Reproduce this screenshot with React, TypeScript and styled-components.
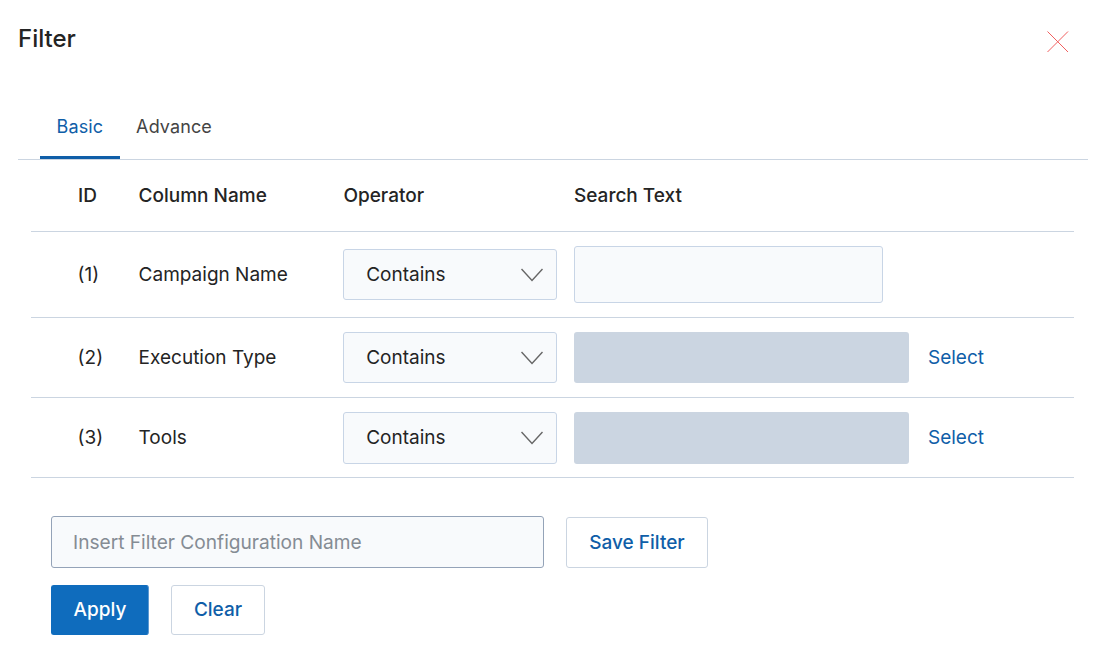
import React from "react";
import styled, { createGlobalStyle } from "styled-components";

const GlobalStyle = createGlobalStyle`
  html, body {
    margin: 0;
    background: #fff;
  }
  body {
    font-family: Inter, "Liberation Sans", sans-serif;
    color: #242424;
  }
`;

const Dialog = styled.div`
  width: 1093px;
  height: 652px;
  overflow: hidden;
  padding: 0 5px 0 18px;
  box-sizing: border-box;
`;

const Header = styled.div`
  display: flex;
  justify-content: space-between;
  height: 101px;
  padding-top: 24px;
  box-sizing: border-box;
`;

const Title = styled.h2`
  margin: 0;
  font-size: 24px;
  line-height: 29px;
  font-weight: 500;
  color: #242424;
`;

const CloseButton = styled.button`
  width: 24px;
  height: 24px;
  margin: 6px 18px 0 0;
  padding: 0;
  border: 0;
  background: none;
  display: block;
`;

const Tabs = styled.div`
  display: flex;
  height: 59px;
  box-sizing: border-box;
  padding-left: 22px;
  border-bottom: 1px solid #cbd5e1;
`;

const Tab = styled.div<{ $active?: boolean }>`
  padding: 0 16.4px 0 16.6px;
  height: 58px;
  box-sizing: border-box;
  line-height: 52px;
  font-size: 18px;
  letter-spacing: 0.1px;
  color: ${(p) => (p.$active ? "#0f5ea8" : "#444")};
  border-bottom: 3px solid ${(p) => (p.$active ? "#0f5ea8" : "transparent")};
`;

const Table = styled.div`
  margin: 0 14px 0 13px;
`;

const Row = styled.div<{ $height: number }>`
  display: grid;
  grid-template-columns: 107.6px 204px 231.4px 354px auto;
  align-items: center;
  height: ${(p) => p.$height}px;
  box-sizing: border-box;
  border-bottom: 1px solid #cbd5e1;
  font-size: 19px;
  color: #242424;
`;

const Cell = styled.div`
  white-space: nowrap;
`;

const IdCell = styled(Cell)`
  padding-left: 46.6px;
`;

const HeadCell = styled(Cell)<{ $first?: boolean }>`
  font-weight: 500;
  padding-left: ${(p) => (p.$first ? "47px" : "0")};
`;

const OperatorHead = styled(HeadCell)`
  padding-left: 0.8px;
`;

const SelectBox = styled.div<{ $height: number }>`
  width: 214px;
  height: ${(p) => p.$height}px;
  box-sizing: border-box;
  display: flex;
  align-items: center;
  justify-content: space-between;
  padding: 0 13px 0 22.6px;
  background: #f8fafc;
  border: 1px solid #c8d5e6;
  border-radius: 3px;
`;

const SearchInput = styled.input`
  display: block;
  width: 309px;
  height: 57px;
  box-sizing: border-box;
  background: #f8fafc;
  border: 1px solid #c8d5e6;
  border-radius: 3px;
`;

const DisabledInput = styled.div<{ $height: number }>`
  width: 335px;
  height: ${(p) => p.$height}px;
  background: #cbd5e1;
  border-radius: 3px;
`;

const SelectLink = styled.a`
  color: #0f5ea8;
  font-size: 19px;
`;

const Footer = styled.div`
  padding: 38px 0 0 33px;
  display: flex;
  flex-direction: column;
  gap: 17px;
`;

const FooterRow = styled.div`
  display: flex;
  align-items: center;
  gap: 22px;
`;

const NameInput = styled.input`
  width: 493px;
  height: 52px;
  box-sizing: border-box;
  padding: 0 21px;
  font: 400 19.13px Inter, "Liberation Sans", sans-serif;
  background: #f8fafc;
  border: 1px solid #94a3b8;
  border-radius: 3px;
  &::placeholder {
    color: #858c94;
    opacity: 1;
  }
`;

const Button = styled.button<{ $primary?: boolean; $width: number; $height: number }>`
  width: ${(p) => p.$width}px;
  height: ${(p) => p.$height}px;
  padding: 0 0 ${(p) => 51 - p.$height}px;
  box-sizing: border-box;
  font: 500 19px Inter, "Liberation Sans", sans-serif;
  border-radius: 3px;
  color: ${(p) => (p.$primary ? "#fff" : "#0f5ea8")};
  background: ${(p) => (p.$primary ? "#0f6cbd" : "#fff")};
  border: 1px solid ${(p) => (p.$primary ? "#0f6cbd" : "#cbd5e1")};
  border-right-color: ${(p) => (p.$primary ? "#5f9ad1" : "#cbd5e1")};
`;

const CloseIcon = () => (
  <svg width="24" height="24" viewBox="0 0 24 24" fill="none" stroke="#ef4444" strokeWidth="1" opacity="0.85">
    <path d="M1.5 1.5 L22 22 M22 1.5 L1.5 22" />
  </svg>
);

const Chevron = () => (
  <svg width="22" height="14" viewBox="0 0 22 14" fill="none" stroke="#666" strokeWidth="1.4">
    <path d="M0.5 1 L11 12.5 L21.5 1" />
  </svg>
);

const rows = [
  { id: 1, name: "Campaign Name", height: 86, box: 51 },
  { id: 2, name: "Execution Type", height: 80, box: 51, select: true },
  { id: 3, name: "Tools", height: 80, box: 52, select: true },
];

export default function App() {
  return (
    <Dialog>
      <GlobalStyle />
      <Header>
        <Title>Filter</Title>
        <CloseButton aria-label="Close">
          <CloseIcon />
        </CloseButton>
      </Header>
      <Tabs>
        <Tab $active>Basic</Tab>
        <Tab>Advance</Tab>
      </Tabs>
      <Table>
        <Row $height={72}>
          <HeadCell $first>ID</HeadCell>
          <HeadCell>Column Name</HeadCell>
          <OperatorHead>Operator</OperatorHead>
          <HeadCell>Search Text</HeadCell>
        </Row>
        {rows.map((row) => (
          <Row key={row.id} $height={row.height}>
            <IdCell>({row.id})</IdCell>
            <Cell>{row.name}</Cell>
            <SelectBox $height={row.box}>
              Contains
              <Chevron />
            </SelectBox>
            {row.select ? <DisabledInput $height={row.box} /> : <SearchInput />}
            {row.select && <SelectLink>Select</SelectLink>}
          </Row>
        ))}
      </Table>
      <Footer>
        <FooterRow>
          <NameInput placeholder="Insert Filter Configuration Name" />
          <Button $width={142} $height={51}>Save Filter</Button>
        </FooterRow>
        <FooterRow>
          <Button $primary $width={98} $height={50}>Apply</Button>
          <Button $width={94} $height={50}>Clear</Button>
        </FooterRow>
      </Footer>
    </Dialog>
  );
}
